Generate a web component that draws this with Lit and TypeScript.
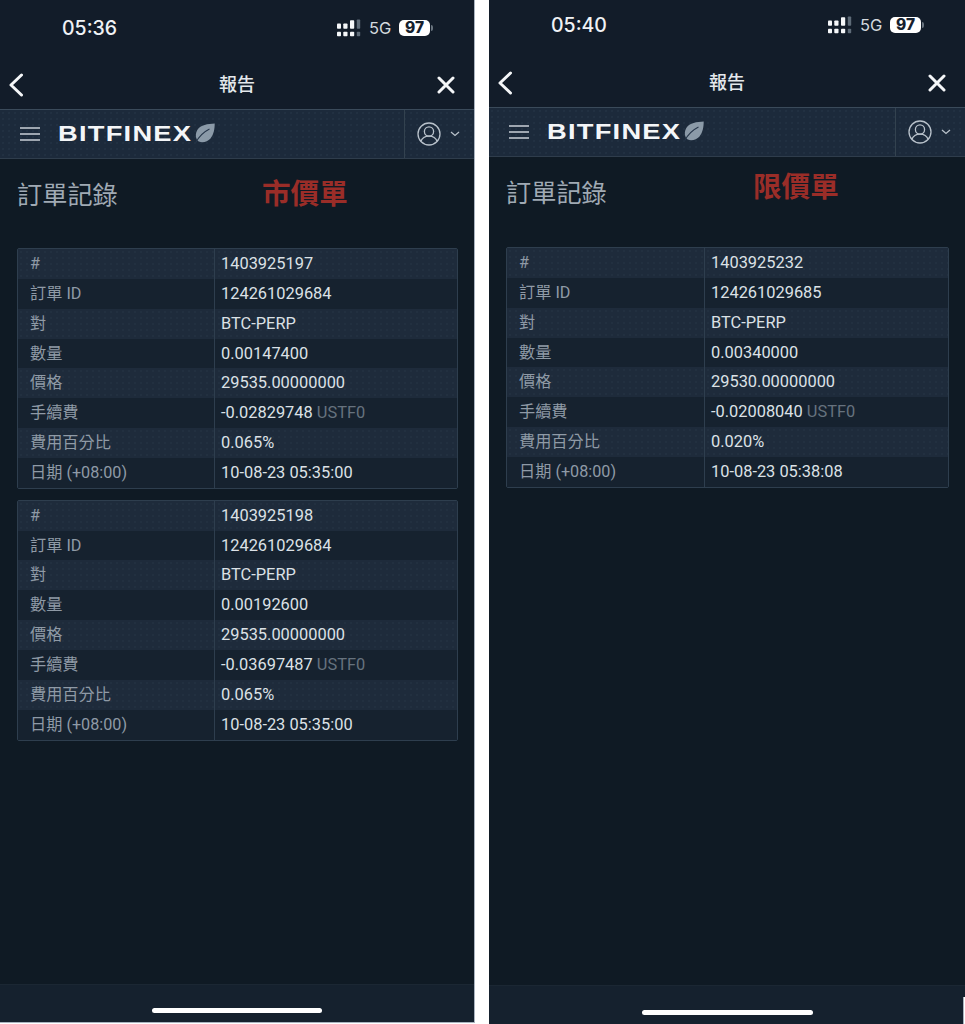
import { LitElement, html, css, svg } from "lit";
import { customElement, property } from "lit/decorators.js";

type Row = [string, string, string?];
const labels = ["#", "訂單 ID", "對", "數量", "價格", "手續費", "費用百分比", "日期 (+08:00)"];
const table = (id: string, order: string, qty: string, price: string, fee: string, pct: string, date: string): Row[] =>
  [[labels[0], id], [labels[1], order], [labels[2], "BTC-PERP"], [labels[3], qty], [labels[4], price], [labels[5], fee, "USTF0"], [labels[6], pct], [labels[7], date]];

const signal = svg`<svg class="signal" width="24" height="18" viewBox="0 0 24 18" aria-hidden="true">
  <g fill="#f5f7f9">
    <rect x="0" y="4.500" width="4" height="5.200" rx=".8"/><rect x="6.300" y="4.500" width="4.200" height="5.200" rx=".8"/>
    <rect x="13" y="1.300" width="4.200" height="8.400" rx=".8"/>
    <rect x="0" y="12.800" width="4" height="4.400" rx=".8"/><rect x="6.300" y="12.800" width="4.200" height="4.400" rx=".8"/><rect x="13" y="12.800" width="4.200" height="4.400" rx=".8"/>
  </g>
  <g fill="#5e6b78"><rect x="19.800" y=".5" width="3.400" height="9.200" rx=".8"/><rect x="19.800" y="12.800" width="3.400" height="4.400" rx=".8"/></g>
</svg>`;

const leaf = svg`<svg class="leaf" width="20" height="20" viewBox="0 0 20 20" aria-hidden="true">
  <path d="M19.700 .6C13 1 5.500 1.800 2.300 7C.6 10 .4 13.200 1.500 15.700C2 17 2.800 18 3.800 18.500C7.500 20 12.500 19 15.500 15.500C18.800 11.500 19.700 6 19.700 .6Z" fill="#8b9aa8"/>
  <path d="M.8 19.500C4 13.500 8.500 9 14.500 6" fill="none" stroke="#26364a" stroke-width="1.100"/>
</svg>`;

const back = svg`<svg class="back" width="16" height="24" viewBox="0 0 16 24" aria-hidden="true"><path d="M13.500 2 3 12l10.500 10" fill="none" stroke="#f4f6f8" stroke-width="3" stroke-linecap="round" stroke-linejoin="round"/></svg>`;
const close = svg`<svg width="18" height="18" viewBox="0 0 18 18" aria-hidden="true"><path d="M2 2l14 14M16 2 2 16" fill="none" stroke="#f4f6f8" stroke-width="3" stroke-linecap="round"/></svg>`;
const burger = svg`<svg width="20" height="14" viewBox="0 0 20 14" aria-hidden="true"><path d="M0 1h20M0 7h20M0 13h20" stroke="#c9d0d7" stroke-width="1.300"/></svg>`;
const user = svg`<svg width="24" height="24" viewBox="0 0 24 24" aria-hidden="true"><g fill="none" stroke="#b9c2cb" stroke-width="1.300"><circle cx="12" cy="12" r="11"/><circle cx="12" cy="9.500" r="4.600"/><path d="M3.800 19.400c1.300-3.400 4.400-5.300 8.200-5.300s6.900 1.900 8.200 5.300"/></g></svg>`;
const chevron = svg`<svg width="10" height="6" viewBox="0 0 10 6" aria-hidden="true"><path d="M1 1l4 3.500L9 1" fill="none" stroke="#b9c2cb" stroke-width="1.300"/></svg>`;

@customElement("phone-panel")
class PhonePanel extends LitElement {
  @property() side = "left";
  @property() time = "";
  @property() tag = "";
  @property({ attribute: false }) tables: Row[][] = [];

  static styles = css`
    :host { display: flex; flex-direction: column; position: relative; background: #0f1a24; overflow: hidden;
      font-family: Roboto, "Noto Sans CJK TC", sans-serif; }
    :host([side="left"]) { width: 474px; height: 1022px; border-right: 1px solid #aab4c0; border-bottom: 1px solid #aab4c0; }
    :host([side="right"]) { width: 476px; height: 1024px; }
    .status { display: flex; align-items: center; background: #121c29; color: #f0f2f5; flex: none; }
    :host([side="left"]) .status { height: 56px; padding-bottom: 4px; }
    :host([side="right"]) .status { height: 50px; padding-bottom: 8px; }
    .time { margin-left: 62px; width: 275px; font: 500 19.500px/24px Inter, sans-serif; }
    :host([side="right"]) .time { width: 277px; }
    .signal { margin-right: 8px; flex: none; }
    .net { font: 400 16.500px/20px Inter, sans-serif; color: #d4d9de; width: 30px; }
    .battery { width: 31px; height: 16px; border-radius: 5px; background: #fff; color: #15202d; margin-left: 0;
      font: 800 15.500px/16px Inter, sans-serif; text-align: center; }
    .tip { width: 2px; height: 6px; background: #68737e; border-radius: 0 2px 2px 0; margin-left: 1px; }
    .nav { height: 49px; flex: none; display: grid; grid-template-columns: 1fr auto 1fr; align-items: center; background: #121c29; padding: 0 19px; }
    .nav h2 { margin: 0; font: 500 18px/24px Roboto, "Noto Sans CJK TC", sans-serif; color: #e4e8ec; }
    .nav svg { display: block; }
    .nav .back { margin-left: -11px; }
    .nav svg:last-child { justify-self: end; }
    .head { height: 48px; flex: none; display: flex; align-items: center;
      background-color: #1c2a3b;
      background-image: radial-gradient(rgba(120,140,160,.13) .6px, transparent .8px);
      background-size: 6px 6px;
      border-top: 1px solid #3a4a5a; border-bottom: 1px solid #2f3d4c; }
    .burger { margin-left: 20px; margin-right: 18px; display: flex; }
    .logo { display: flex; align-items: center; flex: 1; min-width: 0; }
    .word { display: inline-block; width: 137px; color: #f4f6f8; font: 700 22px/24px "Liberation Sans", sans-serif; letter-spacing: 1px; transform: scaleX(1.240); transform-origin: left center; }
    .leaf { flex: none; margin-top: -3px; }
    .account { width: 70px; align-self: stretch; border-left: 1px solid #33424f; display: flex; align-items: center; gap: 9px; padding-left: 12px; box-sizing: border-box; }
    .main { flex: 1; min-height: 0; padding: 0 16px 0 17px; }
    h1 { margin: 19px 0 40px; font: 400 25.200px/30px "Noto Sans CJK TC", sans-serif; color: #a0aab4; }
    :host([side="right"]) h1 { margin: 19px 0 41px; }
    .tag { position: absolute; top: 176px; left: 262px; font: 700 28.600px/32px "Noto Sans CJK TC", sans-serif; color: #9a2d28; }
    :host([side="right"]) .tag { top: 169px; left: 264px; }
    .table { border: 1px solid #2e3e4e; border-radius: 2px; margin-bottom: 11px; font-size: 16.200px; }
    .row { display: grid; grid-template-columns: 197px 1fr; height: 29.850px; line-height: 29.500px; background: #16222f; }
    :host([side="right"]) .row { grid-template-columns: 198px 1fr; }
    .row:nth-child(odd) { background-color: #1e2b3b;
      background-image: radial-gradient(rgba(120,140,160,.11) .6px, transparent .8px); background-size: 6px 6px; }
    .label { padding-left: 12px; color: #8f9aa6; border-right: 1px solid #2e3e4e; }
    .val { padding-left: 6px; color: #dce1e6; font-size: 16.400px; white-space: nowrap; }
    .unit { color: #66727e; }
    .foot { height: 37px; flex: none; display: flex; justify-content: center; align-items: flex-start; background: #15212e; border-top: 1px solid #1b2733; }
    :host([side="right"]) .foot { height: 38px; }
    .bar { width: 170px; height: 5px; border-radius: 3px; background: #fff; margin-top: 23px; }
    :host([side="right"]) .bar { margin-top: 24px; width: 171px; }
    .corner { display: none; }
    :host([side="right"]) .corner { display: block; position: absolute; right: 0; bottom: 0; width: 1px; height: 27px; background: #fff; border-left: 1px solid #aab4c0; }
  `;

  render() {
    return html`
      <div class="status">
        <span class="time">${this.time}</span>
        ${signal}
        <span class="net">5G</span>
        <span class="battery">97</span><span class="tip"></span>
      </div>
      <div class="nav">${back}<h2>報告</h2>${close}</div>
      <div class="head">
        <span class="burger">${burger}</span>
        <div class="logo"><span class="word">BITFINEX</span>${leaf}</div>
        <div class="account">${user}${chevron}</div>
      </div>
      <div class="main">
        <h1>訂單記錄</h1>
        ${this.tables.map((t) => html`<div class="table">
          ${t.map(([k, v, u]) => html`<div class="row"><div class="label">${k}</div><div class="val">${v}${u ? html` <span class="unit">${u}</span>` : ""}</div></div>`)}
        </div>`)}
      </div>
      <div class="foot"><div class="bar"></div></div>
      <div class="tag">${this.tag}</div>
      <div class="corner"></div>
    `;
  }
}

@customElement("app-root")
class AppRoot extends LitElement {
  static styles = css`
    :host { display: flex; justify-content: space-between; align-items: flex-start; width: 965px; height: 1024px; background: #fff; overflow: hidden; }
  `;
  left = [
    table("1403925197", "124261029684", "0.00147400", "29535.00000000", "-0.02829748", "0.065%", "10-08-23 05:35:00"),
    table("1403925198", "124261029684", "0.00192600", "29535.00000000", "-0.03697487", "0.065%", "10-08-23 05:35:00"),
  ];
  right = [table("1403925232", "124261029685", "0.00340000", "29530.00000000", "-0.02008040", "0.020%", "10-08-23 05:38:08")];
  render() {
    return html`
      <phone-panel side="left" time="05:36" tag="市價單" .tables=${this.left}></phone-panel>
      <phone-panel side="right" time="05:40" tag="限價單" .tables=${this.right}></phone-panel>
    `;
  }
}
